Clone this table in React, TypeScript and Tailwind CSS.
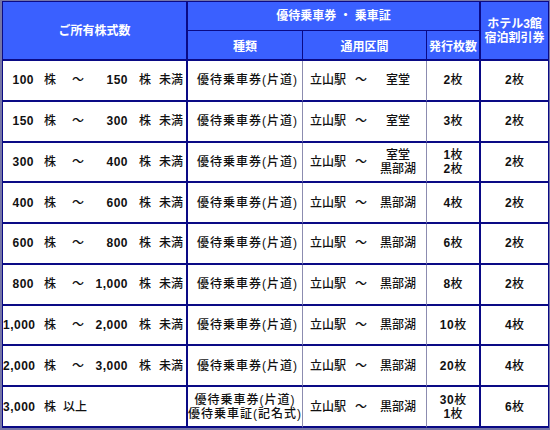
import React from "react";

type Row = {
  a: string;
  b?: string;
  kind: string[];
  dest: string[];
  count: [string, string][];
  hotel: [string, string];
};

const rows: Row[] = [
  { a: "100", b: "150", kind: ["優待乗車券(片道)"], dest: ["室堂"], count: [["2", "枚"]], hotel: ["2", "枚"] },
  { a: "150", b: "300", kind: ["優待乗車券(片道)"], dest: ["室堂"], count: [["3", "枚"]], hotel: ["2", "枚"] },
  { a: "300", b: "400", kind: ["優待乗車券(片道)"], dest: ["室堂", "黒部湖"], count: [["1", "枚"], ["2", "枚"]], hotel: ["2", "枚"] },
  { a: "400", b: "600", kind: ["優待乗車券(片道)"], dest: ["黒部湖"], count: [["4", "枚"]], hotel: ["2", "枚"] },
  { a: "600", b: "800", kind: ["優待乗車券(片道)"], dest: ["黒部湖"], count: [["6", "枚"]], hotel: ["2", "枚"] },
  { a: "800", b: "1,000", kind: ["優待乗車券(片道)"], dest: ["黒部湖"], count: [["8", "枚"]], hotel: ["2", "枚"] },
  { a: "1,000", b: "2,000", kind: ["優待乗車券(片道)"], dest: ["黒部湖"], count: [["10", "枚"]], hotel: ["4", "枚"] },
  { a: "2,000", b: "3,000", kind: ["優待乗車券(片道)"], dest: ["黒部湖"], count: [["20", "枚"]], hotel: ["4", "枚"] },
  { a: "3,000", kind: ["優待乗車券(片道)", "優待乗車証(記名式)"], dest: ["黒部湖"], count: [["30", "枚"], ["1", "枚"]], hotel: ["6", "枚"] },
];

function Count({ v }: { v: [string, string] }) {
  return (
    <span>
      <span className="font-bold tracking-[0.5px]">{v[0]}</span>
      {v[1]}
    </span>
  );
}

export default function App() {
  return (
    <div className="w-[550px] h-[430px] border-t border-r border-l-2 border-b-2 border-[#7676a6] bg-white font-['Liberation_Sans','Noto_Sans_CJK_JP',sans-serif] text-[12px] font-medium text-[#111111]">
      <div className="grid h-full grid-cols-[185px_115px_124px_54px_68px] grid-rows-[29px_30px_repeat(9,minmax(0,1fr))] border-t border-l border-[#0a0a85]">
        <div className="row-span-2 flex items-center justify-center border-r-2 border-b-2 border-[#0a0a85] bg-[#3a60ff] font-bold text-white">
          ご所有株式数
        </div>
        <div className="col-span-3 flex items-center justify-center border-r-2 border-b border-[#0a0a85] bg-[#3a60ff] font-bold text-white">
          優待乗車券 ・ 乗車証
        </div>
        <div className="row-span-2 flex flex-col items-center justify-center border-r border-b-2 border-[#0a0a85] bg-[#3a60ff] font-bold leading-[14px] text-white">
          <span>ホテル3館</span>
          <span>宿泊割引券</span>
        </div>
        <div className="flex items-center justify-center border-r border-b-2 border-[#0a0a85] bg-[#3a60ff] pt-[3px] font-bold text-white">
          種類
        </div>
        <div className="flex items-center justify-center border-r border-b-2 border-[#0a0a85] bg-[#3a60ff] pt-[3px] font-bold text-white">
          通用区間
        </div>
        <div className="flex items-center justify-center border-r-2 border-b-2 border-[#0a0a85] bg-[#3a60ff] pt-[3px] font-bold text-white whitespace-nowrap">
          発行枚数
        </div>

        {rows.map((r, i) => (
          <React.Fragment key={i}>
            <div className="flex items-center border-r-2 border-b-2 border-[#0a0a85] whitespace-nowrap">
              <span className="w-[31px] text-right font-bold tracking-[0.5px]">{r.a}</span>
              <span className="ml-[10px]">株</span>
              {r.b ? (
                <>
                  <span className="ml-[16px] w-[12px]">～</span>
                  <span className="w-[44px] text-right font-bold tracking-[0.5px]">{r.b}</span>
                  <span className="ml-[11px]">株</span>
                  <span className="ml-[8px]">未満</span>
                </>
              ) : (
                <span className="ml-[7px]">以上</span>
              )}
            </div>
            <div
              className={
                r.kind.length > 1
                  ? "flex flex-col items-center justify-center border-r border-r-[#8c8cb0] border-b-2 border-b-[#0a0a85] leading-[14px] whitespace-nowrap tracking-[1px]"
                  : "flex items-center border-r border-r-[#8c8cb0] border-b-2 border-b-[#0a0a85] pl-[9px] whitespace-nowrap tracking-[1px]"
              }
            >
              {r.kind.map((k) => (
                <span key={k}>{k}</span>
              ))}
            </div>
            <div className="flex items-center border-r border-r-[#8c8cb0] border-b-2 border-b-[#0a0a85] pl-[7px] whitespace-nowrap">
              <span className="w-[42px]">立山駅</span>
              <span className="w-[18px] pl-[3px]">～</span>
              <div className="flex flex-1 flex-col items-center leading-[14px]">
                {r.dest.map((d) => (
                  <span key={d}>{d}</span>
                ))}
              </div>
            </div>
            <div className="flex flex-col items-center justify-center border-r-2 border-b-2 border-[#0a0a85] leading-[14px]">
              {r.count.map((c, j) => (
                <Count key={j} v={c} />
              ))}
            </div>
            <div className="flex items-center justify-center border-r border-b-2 border-[#0a0a85]">
              <Count v={r.hotel} />
            </div>
          </React.Fragment>
        ))}
      </div>
    </div>
  );
}
